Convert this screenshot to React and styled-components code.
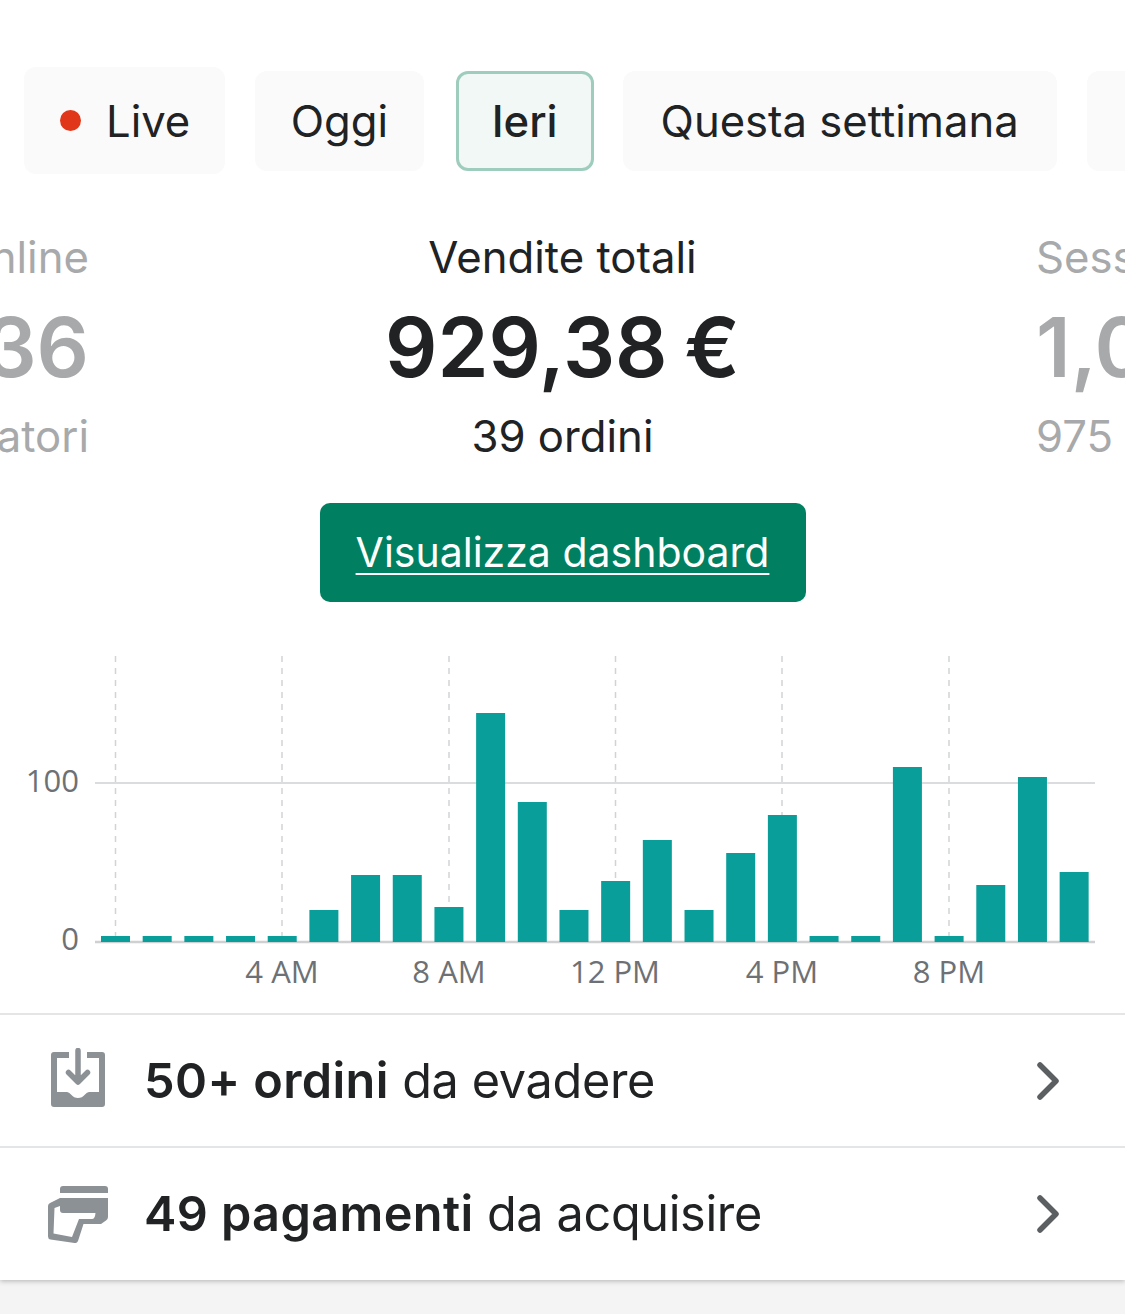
import React from "react";
import styled, { createGlobalStyle } from "styled-components";

const GlobalStyle = createGlobalStyle`
  html, body {
    margin: 0;
    padding: 0;
    background: #f4f4f5;
  }
  body {
    font-family: Inter, "Liberation Sans", sans-serif;
    color: #202223;
    overflow: hidden;
  }
`;

const Page = styled.div`
  width: 1125px;
  height: 1314px;
  overflow: hidden;
`;

const Card = styled.div`
  background: #fff;
  height: 1280px;
  box-shadow: 0 1px 5px rgba(23, 24, 24, 0.3);
`;

const Pills = styled.div`
  display: flex;
  align-items: center;
  gap: 30px;
  height: 107px;
  padding: 67px 0 0 24px;
  overflow: hidden;
`;

const Pill = styled.div`
  flex: none;
  display: flex;
  align-items: center;
  gap: 25px;
  box-sizing: border-box;
  height: ${(p) => (p.$tall ? "107px" : "100px")};
  padding: 2px ${(p) => p.$pad}px 0;
  margin: ${(p) => (p.$active ? "0 -1px 0 2px" : "0")};
  border-radius: 12px;
  font-size: 43.6px;
  background: ${(p) => (p.$active ? "#f1f8f5" : "#fafafa")};
  border: ${(p) => (p.$active ? "3px solid #9fcdbd" : "none")};
  font-weight: ${(p) => (p.$active ? 500 : 400)};
`;

const Dot = styled.span`
  width: 21px;
  height: 21px;
  margin: -2px 0 0 1px;
  border-radius: 50%;
  background: #e0361a;
`;

const Stats = styled.div`
  display: grid;
  grid-template-columns: 89px 1fr 89px;
  margin-top: 54px;
`;

const Stat = styled.div`
  display: flex;
  flex-direction: column;
  overflow: hidden;
  white-space: nowrap;
  align-items: ${(p) => p.$align};
  text-align: center;
  color: ${(p) => (p.$muted ? "#a8a9aa" : "#202223")};
`;

const StatLabel = styled.div`
  font-size: 43.7px;
  line-height: 60px;
`;

const StatValue = styled.div`
  font-size: 82px;
  font-weight: 600;
  line-height: 100px;
  margin: 10px 0 9px;
  word-spacing: -4px;
`;

const StatSub = styled.div`
  font-size: 43.7px;
  line-height: 60px;
`;

const ButtonRow = styled.div`
  display: flex;
  justify-content: center;
  margin-top: 36px;
`;

const DashboardButton = styled.a`
  display: flex;
  align-items: center;
  justify-content: center;
  box-sizing: border-box;
  width: 486px;
  height: 99px;
  padding-bottom: 2px;
  border-radius: 10px;
  background: #008060;
  color: #fff;
  font-size: 41px;
  text-decoration: underline;
  text-decoration-thickness: 2px;
  text-underline-offset: 6px;
`;

const Chart = styled.svg`
  display: block;
  width: 1125px;
  height: 361px;
  margin-top: 50px;
`;

const AxisLabel = styled.text`
  font-family: "Open Sans", "Liberation Sans", sans-serif;
  font-size: 31px;
  fill: #6d7175;
`;

const Row = styled.div`
  display: flex;
  align-items: center;
  box-sizing: border-box;
  height: 133px;
  border-top: 2px solid #e4e5e7;
  padding: 0 66px 0 48px;
`;

const IconBox = styled.div`
  flex: none;
  display: flex;
  justify-content: center;
  width: 60px;
  margin-right: 38px;
  margin-top: ${(p) => p.$nudge}px;
`;

const RowText = styled.div`
  flex: 1;
  font-size: 48.6px;
  letter-spacing: -0.35px;
  margin-left: -2px;
  b {
    font-weight: 600;
    letter-spacing: 0.4px;
  }
`;

const barTops = [
  936, 936, 936, 936, 936, 910, 875, 875, 907, 713, 802, 910,
  881, 840, 910, 853, 815, 936, 936, 767, 936, 885, 777, 872,
];
const gridX = [115.5, 282, 449, 615.5, 782, 949];
const hourLabels = [
  { x: 282, text: "4 AM" },
  { x: 449, text: "8 AM" },
  { x: 615, text: "12 PM" },
  { x: 782, text: "4 PM" },
  { x: 949, text: "8 PM" },
];

const InboxIcon = () => (
  <svg width="54" height="59" viewBox="0 -4 54 59" fill="#8c9196">
    <path d="M3 0H18V6H6V40H16Q18 40 20 42.500Q23 46 27 46Q31 46 34 42.500Q36 40 38 40H48V6H36V0H51A3 3 0 0 1 54 3V52A3 3 0 0 1 51 55H3A3 3 0 0 1 0 52V3A3 3 0 0 1 3 0Z" />
    <path
      d="M27 -1.500V29M17.500 20.500L27 30L36.500 20.500"
      fill="none"
      stroke="#8c9196"
      strokeWidth="5.500"
      strokeLinecap="round"
      strokeLinejoin="round"
    />
  </svg>
);

const CardIcon = () => (
  <svg width="60" height="57" viewBox="0 0 60 57" fill="#8c9196">
    <path d="M15 0H57A3 3 0 0 1 60 3V7H12V3A3 3 0 0 1 15 0Z" />
    <path
      fillRule="evenodd"
      d="M12 12H60V31Q60 33 58 34.500L53 38H35.500L30 55Q29 57.500 26.500 57L2.500 53.500Q0 53 0 50.500V20Q0 18 2 17ZM6.500 22L5.500 47.500L24 51L31 33H44Q47 33 47.500 27H15Q12 27 12 24V20Z"
    />
  </svg>
);

const Chevron = () => (
  <svg width="22" height="38" viewBox="0 0 22 38">
    <path
      d="M3 3L19 19L3 35"
      fill="none"
      stroke="#5c5f62"
      strokeWidth="5.500"
      strokeLinecap="round"
      strokeLinejoin="round"
    />
  </svg>
);

const App = () => {
  return (
    <Page>
      <GlobalStyle />
      <Card>
        <Pills>
          <Pill $tall $pad={35}>
            <Dot />
            Live
          </Pill>
          <Pill $pad={35.5}>Oggi</Pill>
          <Pill $active $pad={33}>Ieri</Pill>
          <Pill $pad={38}>Questa settimana</Pill>
          <Pill $pad={38}>Questo mese</Pill>
        </Pills>

        <Stats>
          <Stat $muted $align="flex-end">
            <StatLabel>Visitatori online</StatLabel>
            <StatValue>136</StatValue>
            <StatSub>visitatori</StatSub>
          </Stat>
          <Stat $align="center">
            <StatLabel>Vendite totali</StatLabel>
            <StatValue>929,38 €</StatValue>
            <StatSub>39 ordini</StatSub>
          </Stat>
          <Stat $muted $align="flex-start">
            <StatLabel>Sessioni</StatLabel>
            <StatValue>1,024</StatValue>
            <StatSub>975 visitatori</StatSub>
          </Stat>
        </Stats>

        <ButtonRow>
          <DashboardButton>Visualizza dashboard</DashboardButton>
        </ButtonRow>

        <Chart viewBox="0 652 1125 361">
          {gridX.map((x) => (
            <line
              key={x}
              x1={x}
              x2={x}
              y1="656"
              y2="942"
              stroke="#d2d3d5"
              strokeWidth="1.500"
              strokeDasharray="6 6"
            />
          ))}
          <line x1="95" x2="1095" y1="783" y2="783" stroke="#cfd0d2" strokeWidth="1.500" />
          <line x1="95" x2="1095" y1="942" y2="942" stroke="#cfd0d2" strokeWidth="2.500" />
          {barTops.map((top, i) => (
            <rect
              key={i}
              x={101 + i * 41.68}
              y={top}
              width="29"
              height={942 - top}
              fill="#0a9e9a"
            />
          ))}
          <AxisLabel x="79" y="792" textAnchor="end">100</AxisLabel>
          <AxisLabel x="79" y="950" textAnchor="end">0</AxisLabel>
          {hourLabels.map((h) => (
            <AxisLabel key={h.text} x={h.x} y="983" textAnchor="middle">
              {h.text}
            </AxisLabel>
          ))}
        </Chart>

        <Row>
          <IconBox $nudge={-6}>
            <InboxIcon />
          </IconBox>
          <RowText>
            <b>50+ ordini</b> da evadere
          </RowText>
          <Chevron />
        </Row>
        <Row>
          <IconBox $nudge={2}>
            <CardIcon />
          </IconBox>
          <RowText>
            <b>49 pagamenti</b> da acquisire
          </RowText>
          <Chevron />
        </Row>
      </Card>
    </Page>
  );
};

export default App;
